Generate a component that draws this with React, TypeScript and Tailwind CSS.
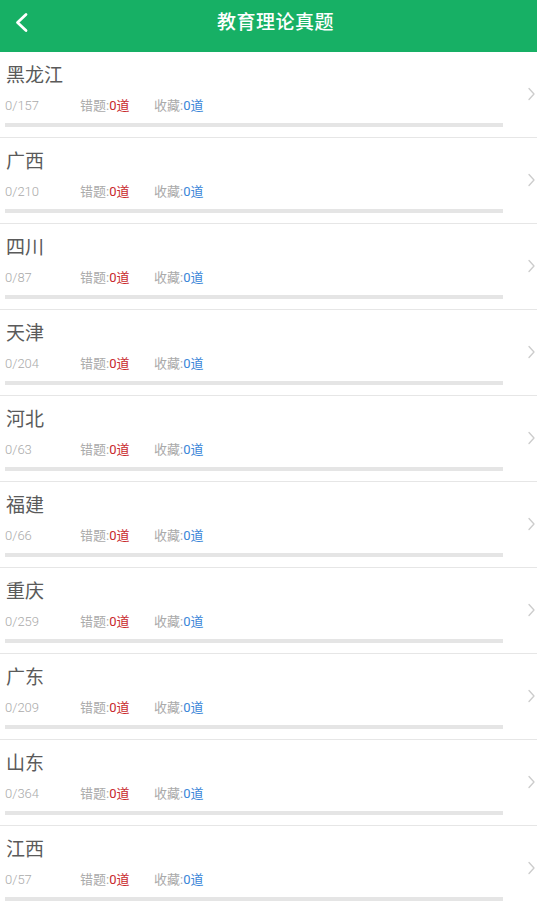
const ITEMS = [
  { name: "黑龙江", total: 157 },
  { name: "广西", total: 210 },
  { name: "四川", total: 87 },
  { name: "天津", total: 204 },
  { name: "河北", total: 63 },
  { name: "福建", total: 66 },
  { name: "重庆", total: 259 },
  { name: "广东", total: 209 },
  { name: "山东", total: 364 },
  { name: "江西", total: 57 },
];

export default function App() {
  return (
    <div
      className="w-[537px] h-[910px] overflow-hidden bg-white"
      style={{ fontFamily: '"Roboto", "Noto Sans CJK SC", sans-serif' }}
    >
      {/* Header */}
      <div className="relative h-[52px] bg-[#17b065] flex items-center justify-center">
        <svg
          className="absolute left-0 top-0"
          width="44"
          height="44"
          viewBox="0 0 44 44"
          fill="none"
        >
          <polyline
            points="26,14.5 17.5,22.5 26,30.5"
            stroke="white"
            strokeWidth="2.8"
            strokeLinecap="round"
            strokeLinejoin="round"
          />
        </svg>
        <h1 className="text-[19px] font-medium text-white tracking-[0.5px] -mt-[6px] ml-[14px]">
          教育理论真题
        </h1>
      </div>

      {/* List */}
      <ul>
        {ITEMS.map((item) => (
          <li
            key={item.name}
            className="flex items-center border-b border-[#e6e6e6]"
          >
            <div className="flex-1 pl-[5px] pt-[13px] pb-[10px]">
              <div className="text-[19px] leading-[22px] text-[#5a5a5a] pl-[1px]">
                {item.name}
              </div>
              <div className="mt-[10px] flex text-[13px] leading-[18px] text-[#aaa]">
                <span className="w-[75px] font-light">0/{item.total}</span>
                <span className="w-[74px]">
                  错题:<span className="text-[#c8282b]">0道</span>
                </span>
                <span>
                  收藏:<span className="text-[#3a86d8]">0道</span>
                </span>
              </div>
              <div className="mt-[8px] w-[498px] h-[4px] bg-[#e5e5e5]" />
            </div>
            <svg
              className="mr-[1px] -mt-[2px]"
              width="9"
              height="14"
              viewBox="0 0 9 14"
              fill="none"
            >
              <polyline
                points="2,1.5 7,7 2,12.5"
                stroke="#cccccc"
                strokeWidth="1.3"
                strokeLinecap="round"
                strokeLinejoin="round"
              />
            </svg>
          </li>
        ))}
      </ul>
    </div>
  );
}
